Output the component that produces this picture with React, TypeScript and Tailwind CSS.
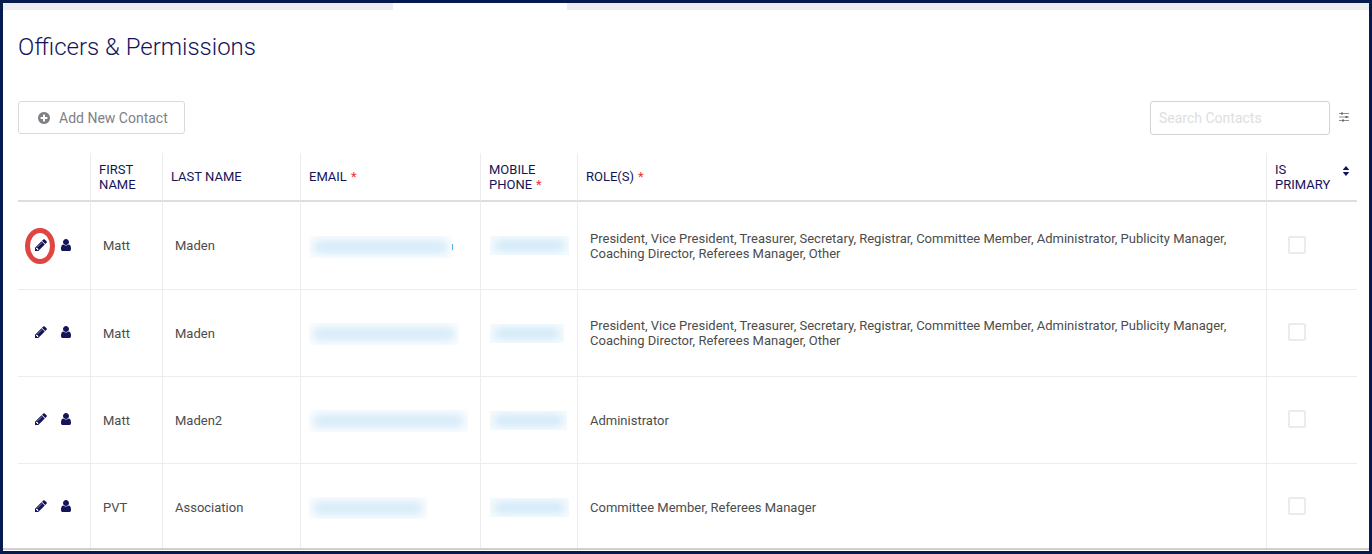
import type { ReactNode } from "react"
import clsx from "clsx"

interface Contact {
    id: number
    firstName: string
    lastName: string
    roles: string
    emailWidth: string
    phoneWidth: string
    highlighted?: boolean
}

const ALL_ROLES =
    "President, Vice President, Treasurer, Secretary, Registrar, Committee Member, Administrator, Publicity Manager, Coaching Director, Referees Manager, Other"

const contacts: Contact[] = [
    {
        id: 1,
        firstName: "Matt",
        lastName: "Maden",
        roles: ALL_ROLES,
        emailWidth: "w-[143px]",
        phoneWidth: "w-[79px]",
        highlighted: true,
    },
    {
        id: 2,
        firstName: "Matt",
        lastName: "Maden",
        roles: ALL_ROLES,
        emailWidth: "w-[150px]",
        phoneWidth: "w-[74px]",
    },
    {
        id: 3,
        firstName: "Matt",
        lastName: "Maden2",
        roles: "Administrator",
        emailWidth: "w-[164px]",
        phoneWidth: "w-[77px]",
    },
    {
        id: 4,
        firstName: "PVT",
        lastName: "Association",
        roles: "Committee Member, Referees Manager",
        emailWidth: "w-[118px]",
        phoneWidth: "w-[79px]",
    },
]

function Glyph({ d, className }: { d: string; className: string }) {
    return (
        <svg viewBox="0 0 1792 1792" fill="currentColor" aria-hidden="true" className={className}>
            <path d={d} />
        </svg>
    )
}

const PENCIL =
    "M491 1536l91-91-235-235-91 91v107h128v128h107zm523-928q0-22-22-22-10 0-17 7l-542 542q-7 7-7 17 0 22 22 22 10 0 17-7l542-542q7-7 7-17zm-54-192l416 416-832 832h-416v-416zm683 96q0 53-37 90l-166 166-416-416 166-165q36-38 90-38 53 0 91 38l235 234q37 39 37 91z"
const USER =
    "M1536 1399q0 109-62.5 187t-150.5 78h-854q-88 0-150.5-78t-62.5-187q0-85 8.5-160.5t31.5-152 58.5-131 94-89 134.5-34.5q131 128 313 128t313-128q76 0 134.5 34.5t94 89 58.5 131 31.5 152 8.5 160.5zm-256-887q0 159-112.5 271.5t-271.5 112.5-271.5-112.5-112.5-271.5 112.5-271.5 271.5-112.5 271.5 112.5 112.5 271.5z"
const PLUS_CIRCLE =
    "M1344 960v-128q0-26-19-45t-45-19h-256v-256q0-26-19-45t-45-19h-128q-26 0-45 19t-19 45v256h-256q-26 0-45 19t-19 45v128q0 26 19 45t45 19h256v256q0 26 19 45t45 19h128q26 0 45-19t19-45v-256h256q26 0 45-19t19-45zm320-64q0 209-103 385.5t-279.5 279.5-385.5 103-385.5-103-279.5-279.5-103-385.5 103-385.5 279.5-279.5 385.5-103 385.5 103 279.5 279.5 103 385.5z"

function SlidersIcon() {
    return (
        <svg viewBox="0 0 10 10" className="size-[10px]" aria-hidden="true">
            <path d="M0 1.5h10M0 5h10M0 8.5h10" stroke="#8d8e93" strokeWidth="1" />
            <path d="M2 .5h2v2H2zM6.5 4h2v2h-2zM3 7.5h2v2H3z" fill="#66676c" />
        </svg>
    )
}

function SortIcon() {
    return (
        <svg viewBox="0 0 6 10" className="h-[10px] w-[6px]" fill="currentColor" aria-hidden="true">
            <path d="M3 0L6 3.4Q6 4 5.5 4H.5Q0 4 0 3.4zM3 10L0 6.6Q0 6 .5 6h5Q6 6 6 6.6z" />
        </svg>
    )
}

// Private value, shown only as a smudge
function Redacted({ width, phone }: { width: string; phone?: boolean }) {
    return (
        <span
            className={clsx(
                "block overflow-hidden",
                width,
                phone ? "h-[19px] bg-[#f6fbfe] px-1 py-1" : "h-[22px] bg-[#fbfdff] px-1 py-1",
            )}
        >
            <span className={clsx("block h-full w-full rounded-md blur-xs", phone ? "bg-[#cfe8f7]" : "bg-[#d6ebf8]")} />
        </span>
    )
}

function HeadCell({ children, required, className }: { children?: ReactNode; required?: boolean; className?: string }) {
    return (
        <th
            scope="col"
            className={clsx(
                "h-[49px] border-b-2 border-l border-b-[#dedede] border-l-[#ececec] pr-2 pl-2 text-left text-[13px] leading-[15px] font-normal text-[#14145a]",
                className,
            )}
        >
            {children}
            {required && <span className="pl-1 text-[#f0322d]">*</span>}
        </th>
    )
}

function ContactRow({ contact, last, first }: { contact: Contact; last: boolean; first: boolean }) {
    const cell = clsx(
        "border-l border-l-[#ececec] py-0 pr-3 pl-3",
        first ? "h-[88px]" : last ? "h-[84px] pt-0.5" : "h-[87px]",
        !last && "border-b border-b-[#ececec]",
    )
    const name = `${contact.firstName} ${contact.lastName}`

    return (
        <tr>
            <td className={clsx(cell, "border-l-0 pb-0.5")}>
                <div className="flex items-center gap-[11px] pl-1 text-[#14145a]">
                    <button type="button" aria-label={`Edit ${name}`} className="relative">
                        <Glyph d={PENCIL} className="size-[14px]" />
                        {contact.highlighted && (
                            <span className="absolute -top-[10px] -left-[9px] h-9 w-[30px] rounded-[50%] border-5 border-[#e04641]" />
                        )}
                    </button>
                    <button type="button" aria-label={`View ${name}`}>
                        <Glyph d={USER} className="size-[14px]" />
                    </button>
                </div>
            </td>
            <td className={cell}>{contact.firstName}</td>
            <td className={cell}>{contact.lastName}</td>
            <td className={clsx(cell, "pl-2!")}>
                <span className="flex items-center pt-0.5">
                    <Redacted width={contact.emailWidth} />
                    {contact.highlighted && <span className="h-[6px] w-px bg-[#4fb0ea]" />}
                </span>
            </td>
            <td className={clsx(cell, "pr-1! pl-[9px]!")}>
                <Redacted width={contact.phoneWidth} phone />
            </td>
            <td className={cell}>{contact.roles}</td>
            <td className={clsx(cell, "pb-0.5")}>
                <input
                    type="checkbox"
                    aria-label={`${name} is primary`}
                    className="ml-[9px] block size-[18px] appearance-none rounded-xs border-2 border-[#ebebeb] bg-white"
                />
            </td>
        </tr>
    )
}

export default function App() {
    return (
        <div className="flex min-h-screen flex-col border-3 border-[#051a4e] bg-white font-['Roboto',sans-serif]">
            <div className="flex h-[7px] bg-[#ededf0]">
                <div className="ml-[390px] w-[174px] bg-white" />
            </div>
            <main className="grow pr-3 pl-[15px]">
                <h1 className="pt-[21px] text-2xl font-light text-[#14145a]">Officers &amp; Permissions</h1>
                <div className="mt-[38px] flex items-start justify-between">
                    <button
                        type="button"
                        className="flex h-[33px] items-center gap-2 rounded-[3px] border border-[#dadada] pr-4 pl-[18px] text-sm text-[#808085]"
                    >
                        <Glyph d={PLUS_CIRCLE} className="size-[14px]" />
                        Add New Contact
                    </button>
                    <div className="flex items-center gap-[9px] pr-2">
                        <input
                            type="text"
                            aria-label="Search Contacts"
                            placeholder="Search Contacts"
                            className="h-[34px] w-[180px] rounded-[3px] border border-[#d3d3d3] px-2 text-sm placeholder:text-[#dedede]"
                        />
                        <button type="button" aria-label="Filter contacts" className="pb-0.5">
                            <SlidersIcon />
                        </button>
                    </div>
                </div>
                <table className="mt-[18px] w-full table-fixed border-separate border-spacing-0 text-[13px] leading-[15px] text-[#4c4c4c]">
                    <colgroup>
                        <col className="w-[72px]" />
                        <col className="w-[72px]" />
                        <col className="w-[138px]" />
                        <col className="w-[180px]" />
                        <col className="w-[97px]" />
                        <col />
                        <col className="w-[91px]" />
                    </colgroup>
                    <thead>
                        <tr>
                            <HeadCell className="border-l-0" />
                            <HeadCell>FIRST NAME</HeadCell>
                            <HeadCell>LAST NAME</HeadCell>
                            <HeadCell required>EMAIL</HeadCell>
                            <HeadCell required>MOBILE PHONE</HeadCell>
                            <HeadCell required>ROLE(S)</HeadCell>
                            <HeadCell>
                                <div className="flex items-start justify-between">
                                    <span className="w-14">IS PRIMARY</span>
                                    <button type="button" aria-label="Sort by is primary" className="pt-1">
                                        <SortIcon />
                                    </button>
                                </div>
                            </HeadCell>
                        </tr>
                    </thead>
                    <tbody>
                        {contacts.map((contact, index) => (
                            <ContactRow
                                key={contact.id}
                                contact={contact}
                                first={index === 0}
                                last={index === contacts.length - 1}
                            />
                        ))}
                    </tbody>
                </table>
            </main>
            <div className="mb-px h-[2px] bg-[#d0d0d0]" />
        </div>
    )
}
